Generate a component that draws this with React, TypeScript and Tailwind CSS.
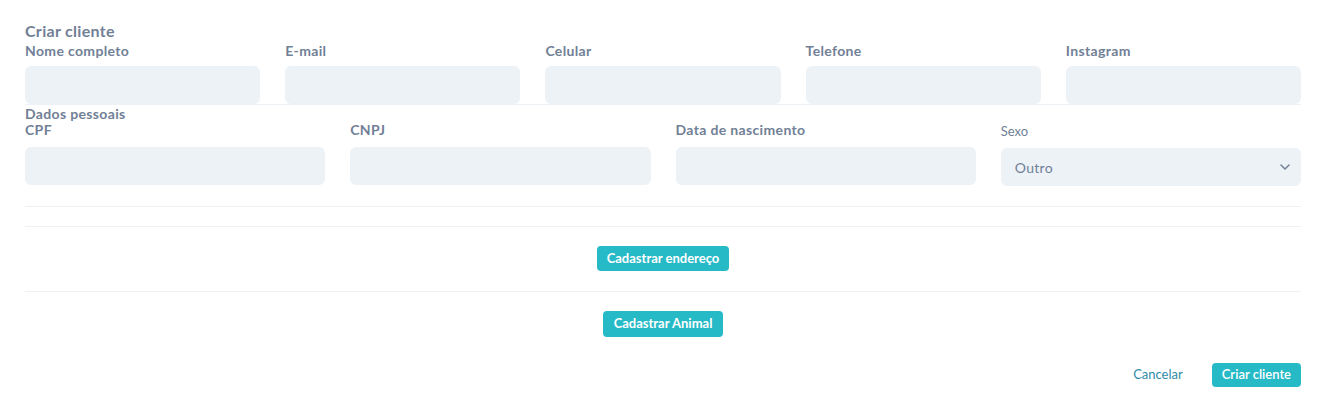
import React from "react";

const font = { fontFamily: "Lato, 'Noto Sans', sans-serif" };

function Field({ label }: { label: string }) {
  return (
    <div className="flex flex-col">
      <div className="text-[14px] font-bold leading-[20px] tracking-[0.35px] text-[#718096]">{label}</div>
      <div className="mt-[5px] h-[38px] rounded-[6px] bg-[#edf2f7]" />
    </div>
  );
}

function Field2({ label }: { label: string }) {
  return (
    <div className="flex flex-col">
      <div className="text-[14px] font-bold leading-[16px] tracking-[0.35px] text-[#718096]">{label}</div>
      <div className="mt-[9px] h-[38px] rounded-[6px] bg-[#edf2f7]" />
    </div>
  );
}

export default function App() {
  return (
    <div className="w-[1324px] h-[411px] bg-white pl-[25px] pr-[23px] pt-[21px] text-[#718096]" style={font}>
      <div className="text-[16px] font-bold leading-[20px] tracking-[0.3px]">Criar cliente</div>
      <div className="grid grid-cols-5 gap-x-[25px] border-b border-[#edf2f7]">
        <Field label="Nome completo" />
        <Field label="E-mail" />
        <Field label="Celular" />
        <Field label="Telefone" />
        <Field label="Instagram" />
      </div>
      <div className="mt-[1px] text-[14px] font-bold leading-[16px] tracking-[0.35px]">Dados pessoais</div>
      <div className="grid grid-cols-4 gap-x-[25px] border-b border-[#edf2f7] pb-[20px]">
        <Field2 label="CPF" />
        <Field2 label="CNPJ" />
        <Field2 label="Data de nascimento" />
        <div className="flex flex-col pt-[1px]">
          <div className="text-[13px] leading-[16px] text-[#718096]">Sexo</div>
          <div className="mt-[9px] flex h-[38px] items-center justify-between rounded-[6px] bg-[#edf2f7] pl-[14px] pr-[11px]">
            <span className="text-[14px] tracking-[0.3px] text-[#718096]">Outro</span>
            <svg width="10" height="6" viewBox="0 0 10 6" fill="none">
              <path d="M1 1l4 4 4-4" stroke="#718096" strokeWidth="1.5" strokeLinecap="round" strokeLinejoin="round" />
            </svg>
          </div>
        </div>
      </div>
      <div className="h-[20px] border-b border-[#edf2f7]" />
      <div className="flex justify-center border-b border-[#edf2f7] pt-[19px] pb-[20px]">
        <button className="h-[25px] rounded-[4px] bg-[#26b9c6] px-[10px] text-[13px] font-bold text-white">
          Cadastrar endereço
        </button>
      </div>
      <div className="flex justify-center pt-[19px]">
        <button className="h-[26px] rounded-[4px] bg-[#26b9c6] px-[11px] text-[13px] font-bold text-white">
          Cadastrar Animal
        </button>
      </div>
      <div className="mt-[26px] flex items-center justify-end gap-[29px]">
        <button className="text-[13px] text-[#2f8aa6]">Cancelar</button>
        <button className="h-[24px] rounded-[4px] bg-[#26b9c6] px-[10px] text-[13px] font-semibold text-white">
          Criar cliente
        </button>
      </div>
    </div>
  );
}
